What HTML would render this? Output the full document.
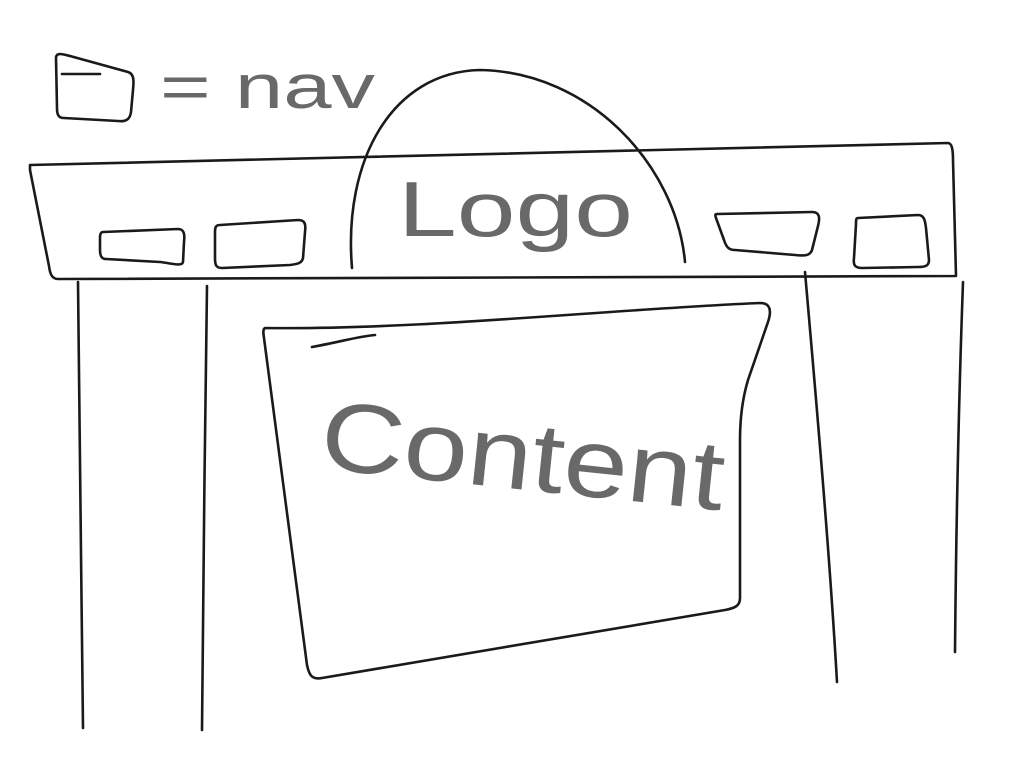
<!DOCTYPE html>
<html><head><meta charset="utf-8"><style>
html,body{margin:0;padding:0;background:#fff;width:1024px;height:768px;overflow:hidden}
svg{display:block}
path{fill:none;stroke:#1a1a1a;stroke-width:2.6;stroke-linecap:round;stroke-linejoin:round}
text{font-family:"Liberation Sans",sans-serif;fill:#444;fill-opacity:0.8;font-weight:normal}
</style></head><body>
<svg width="1024" height="768" viewBox="0 0 1024 768">
<path d="M56,58 C56,52 62,54 70,56 L128,72 C134,74 134,80 133,90 L131,112 C130,120 125,122 118,121 L64,118 C58,118 57,114 57,108 Z"/>
<path d="M62,74 L100,74"/>
<text x="160" y="108" font-size="62" textLength="215" lengthAdjust="spacingAndGlyphs">= nav</text>
<path d="M352,268 C343,160 392,72 480,70 C590,72 676,165 685,262"/>
<path d="M30,165 C300,160 600,150 948,143 C952,143 953,150 953,160 L956,276 L58,279 C52,279 50,274 49,266 L30,170 Z"/>
<path d="M103,232 L178,229 C184,229 185,234 184,242 L183,262 C182,267 170,263 160,262 L106,259 C101,259 100,255 100,250 L100,238 C100,234 101,232 103,232 Z"/>
<path d="M220,225 L298,220 C305,220 306,224 305,232 L303,258 C302,263 298,264 290,265 L222,268 C216,268 215,265 215,258 L215,232 C215,227 216,225 220,225 Z"/>
<path d="M717,214 L812,212 C820,212 820,218 818,226 L812,250 C810,256 804,256 795,255 L735,250 C728,250 726,246 724,240 L716,218 C715,215 715,214 717,214 Z"/>
<path d="M858,218 L918,215 C924,215 925,220 926,228 L929,260 C929,266 925,267 918,267 L862,268 C855,268 853,265 854,258 L856,224 C856,220 856,218 858,218 Z"/>
<text x="398" y="236" font-size="78" textLength="235" lengthAdjust="spacingAndGlyphs">Logo</text>
<path d="M78,282 C80,420 81,580 83,728"/>
<path d="M207,286 C205,430 203,590 202,730"/>
<path d="M805,272 C818,420 830,560 837,682"/>
<path d="M963,282 C958,420 956,540 955,652"/>
<path d="M265,328 C420,330 600,310 760,303 C770,303 772,310 768,322 L748,380 C742,400 740,420 740,440 L740,598 C740,606 735,608 725,610 L322,678 C312,680 309,675 307,665 L264,338 C263,332 263,329 265,328 Z"/>
<path d="M312,347 C340,342 360,336 375,335"/>
<text x="318" y="468" font-size="98" textLength="405" lengthAdjust="spacingAndGlyphs" transform="rotate(6 318 468)">Content</text>
</svg>
</body></html>
